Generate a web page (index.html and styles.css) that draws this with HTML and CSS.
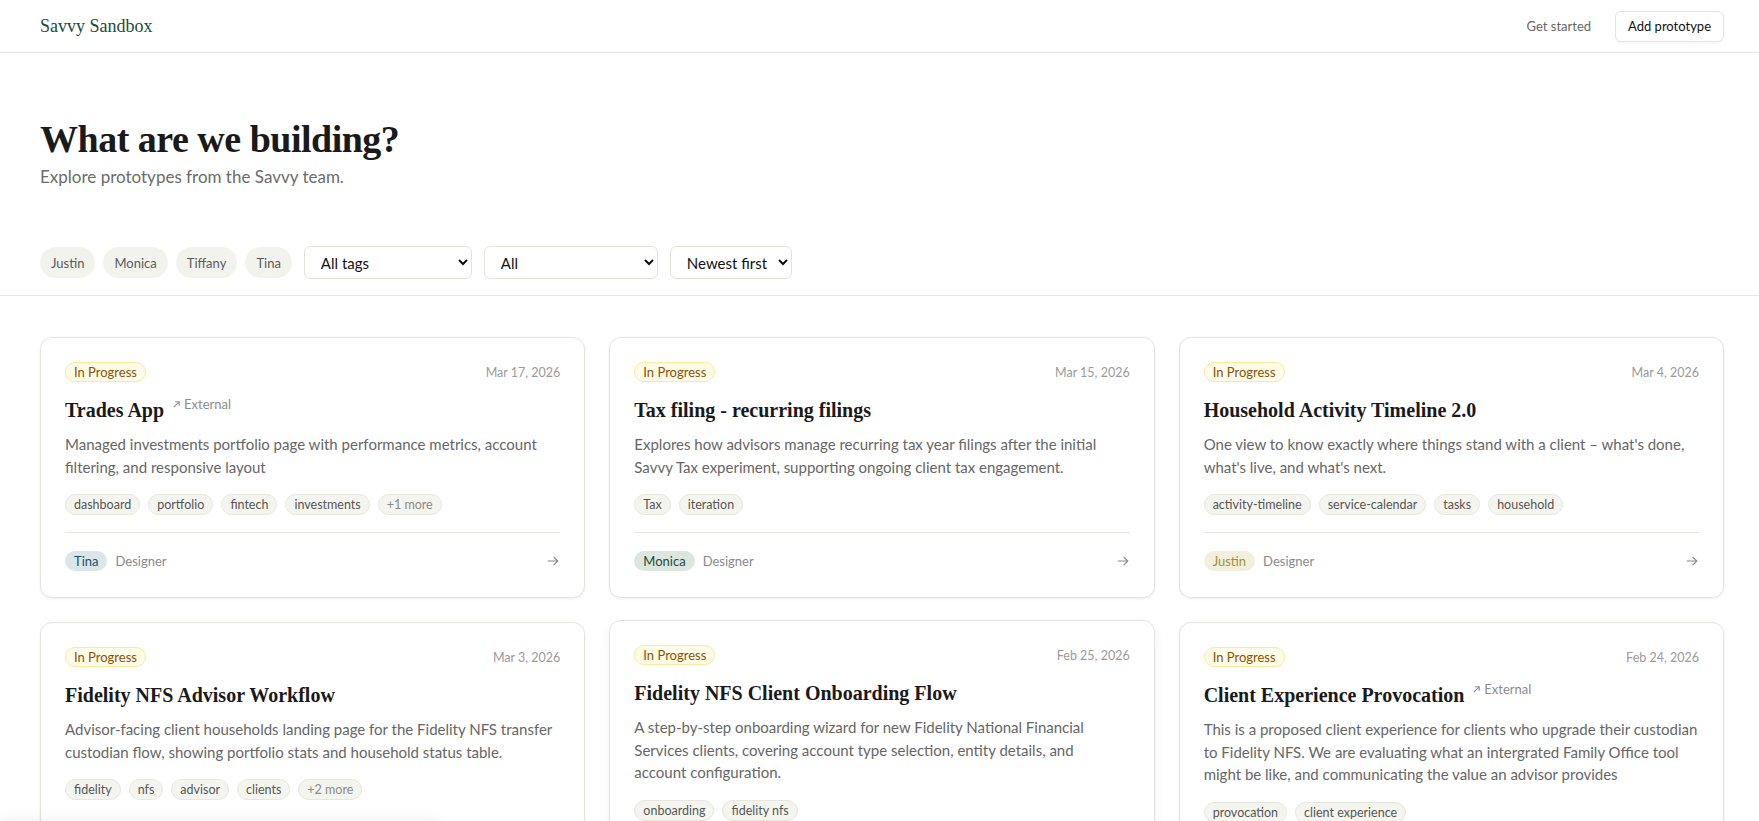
FILE: index.html
```html
<!DOCTYPE html>
<html>
  <head>
    <title>Savvy Sandbox</title>
    <link rel="stylesheet" href="styles.css">
  </head>
  <body>
    <header class="topbar">
      <a class="brand" href="#">Savvy Sandbox</a>
      <nav class="topbar-actions">
        <a class="link-muted" href="#">Get started</a>
        <button class="btn-outline">Add prototype</button>
      </nav>
    </header>

    <section class="hero">
      <h1 class="hero-title">What are we building?</h1>
      <p class="hero-sub">Explore prototypes from the Savvy team.</p>

      <div class="filters">
        <button class="chip">Justin</button>
        <button class="chip">Monica</button>
        <button class="chip">Tiffany</button>
        <button class="chip">Tina</button>
        <select class="select w-tags">
          <option>All tags</option>
        </select>
        <select class="select w-status">
          <option>All</option>
        </select>
        <select class="select w-sort">
          <option>Newest first</option>
        </select>
      </div>
    </section>

    <main class="grid">
      <article class="card">
        <div class="card-top">
          <span class="status">In Progress</span>
          <span class="date">Mar 17, 2026</span>
        </div>
        <h2 class="card-title">
          <span>Trades App</span>
          <span class="ext">
            <svg width="9" height="9" viewBox="0 0 10 10" fill="none" stroke="currentColor" stroke-width="1.2"><path d="M2 8L8 2M3.5 2H8v4.5"/></svg>
            External
          </span>
        </h2>
        <p class="card-desc">Managed investments portfolio page with performance metrics, account filtering, and responsive layout</p>
        <div class="tags">
          <span class="tag">dashboard</span>
          <span class="tag">portfolio</span>
          <span class="tag">fintech</span>
          <span class="tag">investments</span>
          <span class="tag tag-more">+1 more</span>
        </div>
        <div class="card-foot">
          <span class="owner owner-tina">Tina</span>
          <span class="role">Designer</span>
          <svg class="go" width="14" height="14" viewBox="0 0 16 16" fill="none" stroke="currentColor" stroke-width="1.3" stroke-linecap="round" stroke-linejoin="round"><path d="M2.5 8h11M9 3.5L13.5 8 9 12.5"/></svg>
        </div>
      </article>

      <article class="card">
        <div class="card-top">
          <span class="status">In Progress</span>
          <span class="date">Mar 15, 2026</span>
        </div>
        <h2 class="card-title"><span>Tax filing - recurring filings</span></h2>
        <p class="card-desc">Explores how advisors manage recurring tax year filings after the initial Savvy Tax experiment, supporting ongoing client tax engagement.</p>
        <div class="tags">
          <span class="tag">Tax</span>
          <span class="tag">iteration</span>
        </div>
        <div class="card-foot">
          <span class="owner owner-monica">Monica</span>
          <span class="role">Designer</span>
          <svg class="go" width="14" height="14" viewBox="0 0 16 16" fill="none" stroke="currentColor" stroke-width="1.3" stroke-linecap="round" stroke-linejoin="round"><path d="M2.5 8h11M9 3.5L13.5 8 9 12.5"/></svg>
        </div>
      </article>

      <article class="card">
        <div class="card-top">
          <span class="status">In Progress</span>
          <span class="date">Mar 4, 2026</span>
        </div>
        <h2 class="card-title"><span>Household Activity Timeline 2.0</span></h2>
        <p class="card-desc">One view to know exactly where things stand with a client – what's done, what's live, and what's next.</p>
        <div class="tags">
          <span class="tag">activity-timeline</span>
          <span class="tag">service-calendar</span>
          <span class="tag">tasks</span>
          <span class="tag">household</span>
        </div>
        <div class="card-foot">
          <span class="owner owner-justin">Justin</span>
          <span class="role">Designer</span>
          <svg class="go" width="14" height="14" viewBox="0 0 16 16" fill="none" stroke="currentColor" stroke-width="1.3" stroke-linecap="round" stroke-linejoin="round"><path d="M2.5 8h11M9 3.5L13.5 8 9 12.5"/></svg>
        </div>
      </article>

      <article class="card">
        <div class="card-top">
          <span class="status">In Progress</span>
          <span class="date">Mar 3, 2026</span>
        </div>
        <h2 class="card-title"><span>Fidelity NFS Advisor Workflow</span></h2>
        <p class="card-desc">Advisor-facing client households landing page for the Fidelity NFS transfer custodian flow, showing portfolio stats and household status table.</p>
        <div class="tags">
          <span class="tag">fidelity</span>
          <span class="tag">nfs</span>
          <span class="tag">advisor</span>
          <span class="tag">clients</span>
          <span class="tag tag-more">+2 more</span>
        </div>
        <div class="card-foot">
          <span class="owner owner-tina">Tina</span>
          <span class="role">Designer</span>
          <svg class="go" width="14" height="14" viewBox="0 0 16 16" fill="none" stroke="currentColor" stroke-width="1.3" stroke-linecap="round" stroke-linejoin="round"><path d="M2.5 8h11M9 3.5L13.5 8 9 12.5"/></svg>
        </div>
      </article>

      <article class="card is-hover">
        <div class="card-top">
          <span class="status">In Progress</span>
          <span class="date">Feb 25, 2026</span>
        </div>
        <h2 class="card-title"><span>Fidelity NFS Client Onboarding Flow</span></h2>
        <p class="card-desc">A step-by-step onboarding wizard for new Fidelity National Financial Services clients, covering account type selection, entity details, and account configuration.</p>
        <div class="tags">
          <span class="tag">onboarding</span>
          <span class="tag">fidelity nfs</span>
        </div>
        <div class="card-foot">
          <span class="owner owner-monica">Monica</span>
          <span class="role">Designer</span>
          <svg class="go" width="14" height="14" viewBox="0 0 16 16" fill="none" stroke="currentColor" stroke-width="1.3" stroke-linecap="round" stroke-linejoin="round"><path d="M2.5 8h11M9 3.5L13.5 8 9 12.5"/></svg>
        </div>
      </article>

      <article class="card">
        <div class="card-top">
          <span class="status">In Progress</span>
          <span class="date">Feb 24, 2026</span>
        </div>
        <h2 class="card-title">
          <span>Client Experience Provocation</span>
          <span class="ext">
            <svg width="9" height="9" viewBox="0 0 10 10" fill="none" stroke="currentColor" stroke-width="1.2"><path d="M2 8L8 2M3.5 2H8v4.5"/></svg>
            External
          </span>
        </h2>
        <p class="card-desc">This is a proposed client experience for clients who upgrade their custodian to Fidelity NFS. We are evaluating what an intergrated Family Office tool might be like, and communicating the value an advisor provides</p>
        <div class="tags">
          <span class="tag">provocation</span>
          <span class="tag">client experience</span>
        </div>
        <div class="card-foot">
          <span class="owner owner-tiffany">Tiffany</span>
          <span class="role">Designer</span>
          <svg class="go" width="14" height="14" viewBox="0 0 16 16" fill="none" stroke="currentColor" stroke-width="1.3" stroke-linecap="round" stroke-linejoin="round"><path d="M2.5 8h11M9 3.5L13.5 8 9 12.5"/></svg>
        </div>
      </article>
    </main>

    <div class="toast"></div>
  </body>
</html>
```

FILE: styles.css
```css
* {
  box-sizing: border-box;
}
body {
  margin: 0;
  background: #ffffff;
  color: #1a1a1a;
  font-family: Lato, "Noto Sans", sans-serif;
}
a {
  text-decoration: none;
}

/* top bar */
.topbar {
  height: 53px;
  display: flex;
  align-items: center;
  justify-content: space-between;
  padding: 0 35px 0 40px;
  border-bottom: 1px solid #e6e6e3;
}
.brand {
  font-family: "Liberation Serif", serif;
  font-size: 18px;
  color: #1d4a3a;
}
.topbar-actions {
  display: flex;
  align-items: center;
  gap: 24px;
}
.link-muted {
  font-size: 13px;
  color: #666666;
}
.btn-outline {
  height: 31px;
  padding: 0 12px;
  white-space: nowrap;
  font-family: inherit;
  font-size: 13px;
  color: #111111;
  background: #ffffff;
  border: 1px solid #e4e4e1;
  border-radius: 6px;
  box-shadow: 0 1px 2px rgba(0, 0, 0, 0.05);
}

/* hero + filters */
.hero {
  padding: 63px 35px 16px 40px;
  border-bottom: 1px solid #e8e8e3;
}
.hero-title {
  margin: 0;
  font-family: "Liberation Serif", serif;
  font-weight: 700;
  font-size: 38px;
  line-height: 46px;
  letter-spacing: -0.5px;
  color: #1a1a1a;
}
.hero-sub {
  margin: 3px 0 0;
  font-size: 17px;
  line-height: 24px;
  color: #6b6b6b;
}
.filters {
  display: flex;
  align-items: center;
  gap: 8px;
  margin-top: 57px;
}
.chip {
  height: 31px;
  padding: 0 11px;
  border: 0;
  border-radius: 999px;
  background: #f3f3ee;
  font-family: inherit;
  font-size: 13px;
  color: #5a5a5a;
}
.select {
  height: 33px;
  margin-left: 4px;
  padding: 0 8px 0 12px;
  border: 1px solid #e2e2dd;
  border-radius: 6px;
  background: #ffffff;
  font-family: inherit;
  font-size: 15px;
  color: #111111;
}
.w-tags {
  width: 168px;
}
.w-status {
  width: 174px;
}
.w-sort {
  width: 122px;
}

/* card grid */
.grid {
  display: grid;
  grid-template-columns: repeat(3, 1fr);
  gap: 24px;
  padding: 41px 35px 40px 40px;
}
.card {
  display: flex;
  flex-direction: column;
  padding: 24px;
  background: #ffffff;
  border: 1px solid #e4e4df;
  border-radius: 12px;
  box-shadow: 0 1px 3px rgba(0, 0, 0, 0.07);
}
.card.is-hover {
  transform: translateY(-2px);
  box-shadow: 0 4px 12px rgba(0, 0, 0, 0.06);
}
.card-top {
  display: flex;
  align-items: center;
  justify-content: space-between;
  height: 20px;
}
.status {
  height: 20px;
  line-height: 18px;
  padding: 0 8px;
  border: 1px solid #fce99a;
  border-radius: 999px;
  background: #fefbe6;
  font-size: 13px;
  color: #8a5208;
}
.date {
  font-size: 12.5px;
  color: #9a9a9a;
}
.card-title {
  display: flex;
  align-items: flex-start;
  gap: 8px;
  margin: 14px 0 0;
  font-family: "Liberation Serif", serif;
  font-weight: 700;
  font-size: 20px;
  line-height: 28px;
  color: #1a1a1a;
}
.ext {
  display: flex;
  align-items: center;
  gap: 3px;
  font-family: Lato, sans-serif;
  font-weight: 400;
  font-size: 13px;
  line-height: 16px;
  color: #8c8c8c;
}
.card-desc {
  margin: 9px 0 0;
  font-size: 15px;
  line-height: 22.5px;
  color: #666666;
  text-wrap: pretty;
}
.tags {
  display: flex;
  flex-wrap: wrap;
  gap: 8px;
  margin: 16px 0 17px;
}
.tag {
  height: 21px;
  line-height: 19px;
  padding: 0 8px;
  border: 1px solid #e7e7df;
  border-radius: 999px;
  background: #f5f5f0;
  font-size: 12.5px;
  color: #555555;
}
.tag-more {
  color: #8a8a8a;
}
.card-foot {
  display: flex;
  align-items: center;
  gap: 8px;
  margin-top: auto;
  padding-top: 16px;
  height: 41px;
  border-top: 1px solid #e6e6e1;
}
.owner {
  height: 20px;
  line-height: 20px;
  padding: 0 9px;
  border-radius: 999px;
  font-size: 13px;
}
.owner-tina {
  background: #dbe6eb;
  color: #1d4e6a;
}
.owner-monica {
  background: #dce6df;
  color: #1d4a3a;
}
.owner-justin {
  background: #f2f0dc;
  color: #9e9238;
}
.owner-tiffany {
  background: #efe3ea;
  color: #7a3a5e;
}
.role {
  font-size: 13px;
  color: #8a8a8a;
}
.go {
  margin-left: auto;
  color: #8a8a8a;
}

.toast {
  position: fixed;
  left: 0;
  bottom: -60px;
  width: 440px;
  height: 60px;
  background: #ffffff;
  box-shadow: 0 -2px 14px rgba(0, 0, 0, 0.06);
}
```
